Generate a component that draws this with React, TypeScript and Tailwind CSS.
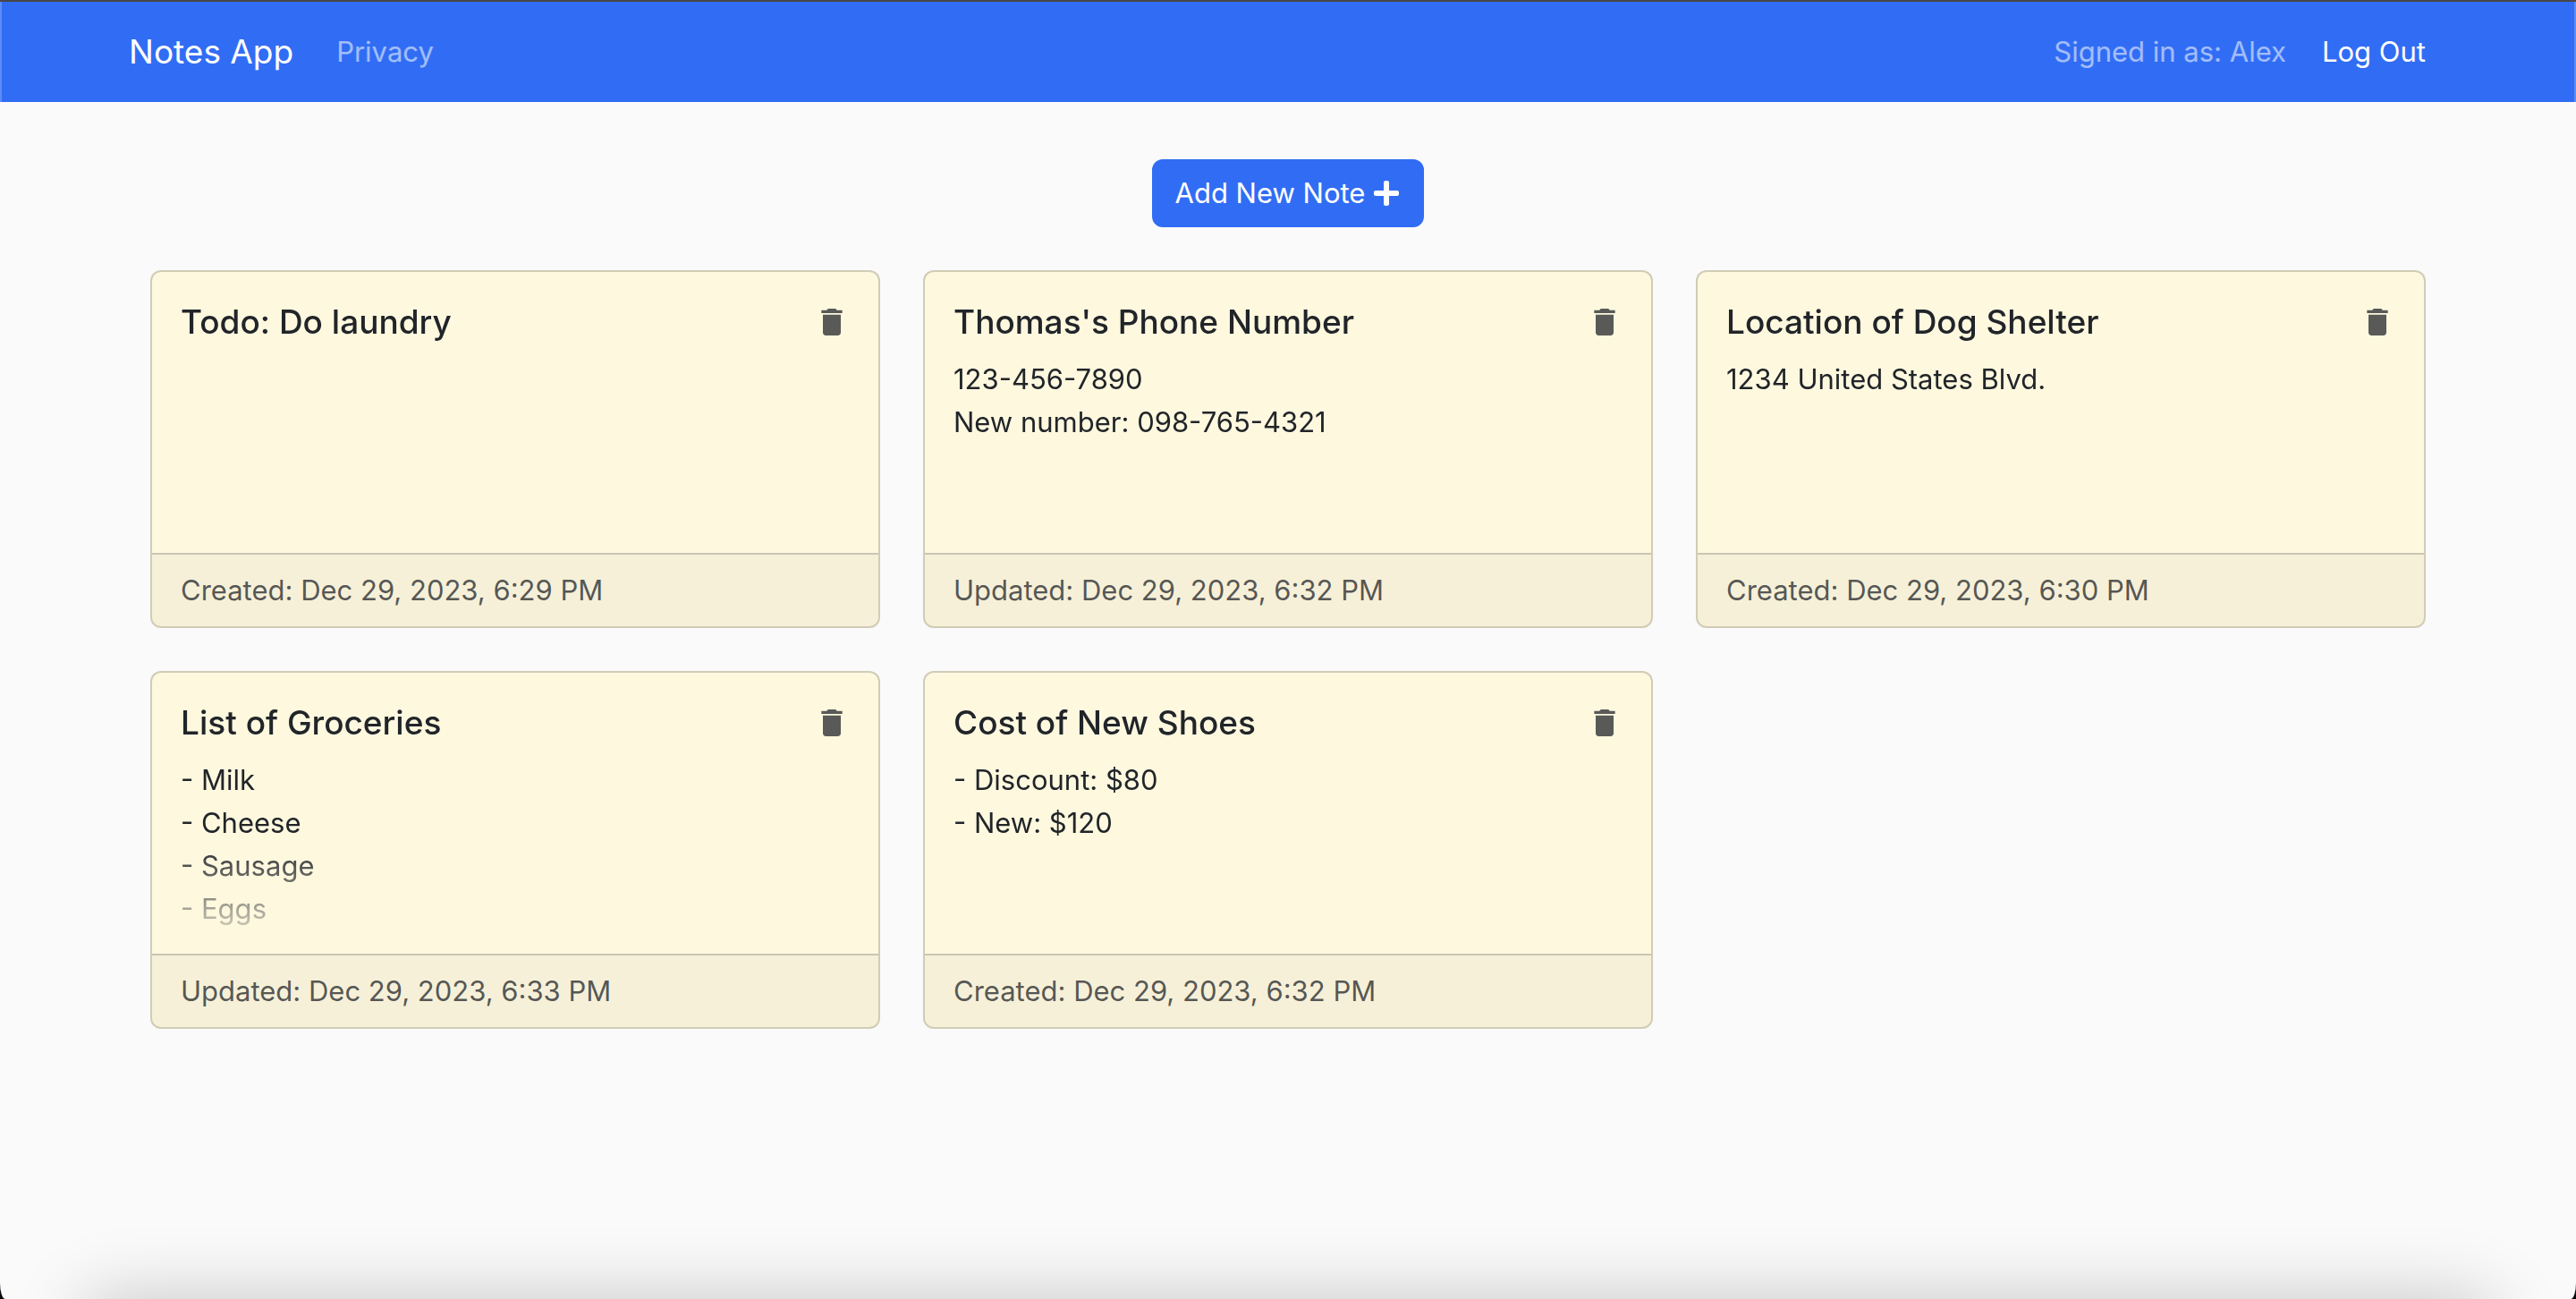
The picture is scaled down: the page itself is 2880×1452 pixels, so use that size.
import { FaPlus } from "react-icons/fa";
import { MdDelete } from "react-icons/md";

type Note = { title: string; lines: string[]; stamp: string };

const notes: Note[] = [
  { title: "Todo: Do laundry", lines: [], stamp: "Created: Dec 29, 2023, 6:29 PM" },
  {
    title: "Thomas's Phone Number",
    lines: ["123-456-7890", "New number: 098-765-4321"],
    stamp: "Updated: Dec 29, 2023, 6:32 PM",
  },
  {
    title: "Location of Dog Shelter",
    lines: ["1234 United States Blvd."],
    stamp: "Created: Dec 29, 2023, 6:30 PM",
  },
  {
    title: "List of Groceries",
    lines: ["- Milk", "- Cheese", "- Sausage", "- Eggs"],
    stamp: "Updated: Dec 29, 2023, 6:33 PM",
  },
  {
    title: "Cost of New Shoes",
    lines: ["- Discount: $80", "- New: $120"],
    stamp: "Created: Dec 29, 2023, 6:32 PM",
  },
];

function NavBar() {
  return (
    <nav className="border-x-2 border-[#5d8af7] bg-[#316df4] py-4">
      <div className="mx-auto flex max-w-[2640px] items-center px-6">
        <a href="#home" className="mr-8 py-2.5 text-[37px] leading-[60px] text-white">
          Notes App
        </a>
        <a href="#privacy" className="p-4 leading-12 text-white/55">
          Privacy
        </a>
        <div className="ml-auto flex items-center">
          <span className="mr-4 text-white/55">Signed in as: Alex</span>
          <button type="button" className="px-6 py-3 text-white">
            Log Out
          </button>
        </div>
      </div>
    </nav>
  );
}

function NoteCard({ note }: { note: Note }) {
  return (
    <article className="flex h-[400px] cursor-pointer flex-col overflow-hidden rounded-xl border-2 border-black/[0.175] bg-[#fef8df]">
      <div className="min-h-0 flex-1 overflow-hidden p-8 mask-[linear-gradient(180deg,#000_60%,transparent)]">
        <div className="mb-4 flex items-center justify-between">
          <h2 className="text-[37px] leading-12 font-medium">{note.title}</h2>
          <button
            type="button"
            aria-label={`Delete ${note.title}`}
            className="text-[#212529]/75"
          >
            <MdDelete className="size-10" />
          </button>
        </div>
        <p className="whitespace-pre-line">{note.lines.join("\n")}</p>
      </div>
      <footer className="border-t-2 border-black/[0.175] bg-black/[0.03] px-8 py-4 text-[#212529]/75">
        {note.stamp}
      </footer>
    </article>
  );
}

export default function App() {
  return (
    <div className="bg-[#0a0a12]">
      <div className="relative min-h-screen overflow-hidden rounded-br-[6px_18px] rounded-bl-[6px_18px] border-t-2 border-[#474747] bg-[#fafafa] font-[Inter,sans-serif] text-[31px] leading-12 text-[#212529]">
        <NavBar />
        <main className="mx-auto max-w-[2640px] px-12 py-16">
          <button
            type="button"
            className="mx-auto mb-12 flex items-center gap-2 rounded-xl border-2 border-[#316df4] bg-[#316df4] px-6 py-3 text-white"
          >
            Add New Note
            <FaPlus className="size-8" />
          </button>
          <div className="grid grid-cols-3 gap-12">
            {notes.map((note) => (
              <NoteCard key={note.title} note={note} />
            ))}
          </div>
        </main>
        <div className="pointer-events-none absolute inset-x-24 top-full h-20 shadow-[0_0_80px_rgba(0,0,0,0.22)]" />
      </div>
    </div>
  );
}
